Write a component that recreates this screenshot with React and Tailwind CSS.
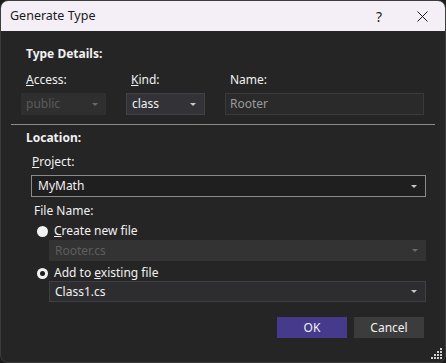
import React from 'react'

const FONT = { fontFamily: '"Noto Sans", "Open Sans", sans-serif' }

function Arrow({ dim }) {
  return (
    <svg width="6" height="3" viewBox="0 0 6 3" className="shrink-0">
      <path d="M0 0 H6 L3 3 Z" fill={dim ? '#6a6a6a' : '#c8c8c8'} />
    </svg>
  )
}

function Combo({ value, className, textClass, dim }) {
  return (
    <div className={`flex items-center justify-between pl-[5px] pr-[8px] ${className}`}>
      <span className={textClass}>{value}</span>
      <Arrow dim={dim} />
    </div>
  )
}

function Radio({ checked }) {
  return (
    <div className="w-[11px] h-[11px] rounded-full bg-[#f2f2f2] flex items-center justify-center shrink-0">
      {checked && <div className="w-[5px] h-[5px] rounded-full bg-[#1e1e1e]" />}
    </div>
  )
}

function Grip() {
  const dots = []
  for (let r = 0; r < 4; r++) {
    for (let c = 3 - r; c < 4; c++) {
      dots.push(<rect key={`${r}-${c}`} x={c * 3} y={r * 3} width="2" height="2" fill="#d0d0d0" />)
    }
  }
  return (
    <svg width="12" height="12" viewBox="0 0 12 12" className="absolute right-[2px] bottom-[2px]">
      {dots}
    </svg>
  )
}

export default function App() {
  return (
    <div className="w-[446px] h-[363px] bg-[#1c1c1c]" style={FONT}>
      <div className="relative w-[446px] h-[363px] border border-[#3c3c3c] rounded-[8px] overflow-hidden bg-[#252526] flex flex-col text-[12px] text-[#f1f1f1]">
        {/* title bar */}
        <div className="h-[30px] bg-[#f4eff7] flex items-center text-[#1a1a1a] shrink-0">
          <span className="ml-[9px] flex-1 text-[12.5px]">Generate Type</span>
          <span className="w-[20px] text-center text-[14px] mr-[28px]">?</span>
          <svg width="11" height="11" viewBox="0 0 11 11" className="mr-[17px]">
            <path d="M0.5 0.5 L10.5 10.5 M10.5 0.5 L0.5 10.5" stroke="#1a1a1a" strokeWidth="1" />
          </svg>
        </div>

        {/* type details */}
        <div className="pl-[25px] mt-[15px] h-[16px] leading-[16px] font-bold">Type Details:</div>
        <div className="flex mt-[10px] ml-[20px] gap-[20px]">
          <div className="w-[85px] flex flex-col">
            <div className="h-[16px] leading-[16px] pl-[5px]"><span className="underline">A</span>ccess:</div>
            <Combo value="public" dim className="mt-[5px] h-[22px] bg-[#2f2f2f]" textClass="text-[#5c5c5c]" />
          </div>
          <div className="w-[79px] flex flex-col">
            <div className="h-[16px] leading-[16px] pl-[5px]"><span className="underline">K</span>ind:</div>
            <Combo value="class" className="mt-[5px] h-[22px] bg-[#333337] border border-[#434346]" textClass="text-[#f1f1f1]" />
          </div>
          <div className="w-[199px] flex flex-col">
            <div className="h-[16px] leading-[16px] pl-[5px]">Name:</div>
            <div className="mt-[5px] h-[22px] bg-[#2a2a2b] border border-[#3a3a3c] flex items-center pl-[4px] text-[#9a9a9a]">Rooter</div>
          </div>
        </div>

        <div className="mx-[10px] mt-[9px] h-px bg-[#8a8a8a]" />

        {/* location */}
        <div className="pl-[25px] mt-[5px] h-[16px] leading-[16px] font-bold">Location:</div>
        <div className="pl-[31px] mt-[8px] h-[16px] leading-[16px]"><span className="underline">P</span>roject:</div>
        <Combo value="MyMath" className="ml-[30px] w-[395px] mt-[5px] h-[22px] bg-[#1f1f1f] border border-[#8a8a8a]" textClass="text-[#f1f1f1] pl-[1px]" />
        <div className="pl-[33px] mt-[6px] h-[16px] leading-[16px]">File Name:</div>
        <div className="ml-[36px] mt-[4px] h-[16px] flex items-center gap-[6px]">
          <Radio />
          <span><span className="underline">C</span>reate new file</span>
        </div>
        <Combo value="Rooter.cs" dim className="ml-[48px] w-[377px] mt-[1px] h-[21px] bg-[#333333]" textClass="text-[#5e5e5e] pl-[1px]" />
        <div className="ml-[36px] mt-[4px] h-[16px] flex items-center gap-[6px]">
          <Radio checked />
          <span>Add to <span className="underline">e</span>xisting file</span>
        </div>
        <Combo value="Class1.cs" className="ml-[48px] w-[377px] mt-[0px] h-[21px] bg-[#2d2d30] border border-[#3f3f46]" textClass="text-[#f1f1f1]" />

        <div className="flex justify-end gap-[7px] mr-[21px] mt-[15px]">
          <div className="w-[70px] h-[21px] bg-[#453a8c] flex items-center justify-center">OK</div>
          <div className="w-[70px] h-[21px] bg-[#3c3c3c] flex items-center justify-center">Cancel</div>
        </div>
        <Grip />
      </div>
    </div>
  )
}
